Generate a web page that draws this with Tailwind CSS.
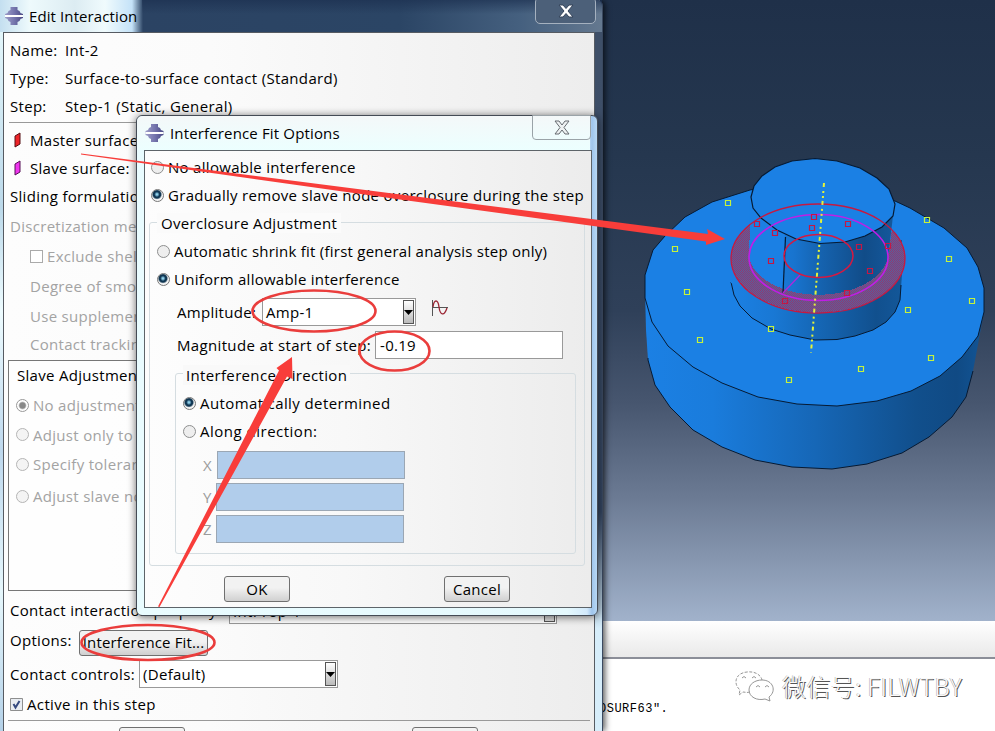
<!DOCTYPE html>
<html lang="en">
<head>
<meta charset="utf-8">
<title>Edit Interaction</title>
<script src="https://cdn.jsdelivr.net/npm/@tailwindcss/browser@4"></script>
</head>
<body class="relative w-[995px] h-[731px] overflow-hidden bg-white text-black text-[15px] leading-[20px] tracking-[0.3px] whitespace-nowrap font-['Open_Sans','Noto_Sans',sans-serif]">
<svg width="0" height="0" class="absolute">
  <defs>
    <linearGradient id="logo" x1="0" x2="1"><stop offset="0" stop-color="#9c9cc8"/><stop offset=".5" stop-color="#7676ae"/><stop offset="1" stop-color="#4b4b86"/></linearGradient>
    <symbol id="app" viewBox="0 0 18 18"><path d="M5.500 0h7v3l2 1 1 2 2.500 1v4l-2.500 1-1 2-2 1v3h-7v-3l-2-1-1-2L0 11V7l2.500-1 1-2 2-1z" fill="url(#logo)"/><path d="M0 9h18" stroke="#fff" stroke-width="2"/></symbol>
  </defs>
</svg>

<!-- viewport, message area -->
<main class="ml-[600px] h-[731px] flex flex-col">
  <svg class="block h-[621px] w-[395px] shrink-0" viewBox="600 0 395 621">
    <defs>
      <linearGradient id="sky" x1="0" y1="0" x2="0" y2="1"><stop offset="0" stop-color="#1f3049"/><stop offset=".25" stop-color="#25374f"/><stop offset=".5" stop-color="#2f4059"/><stop offset=".65" stop-color="#47566f"/><stop offset=".8" stop-color="#6b7a93"/><stop offset="1" stop-color="#a1b2cb"/></linearGradient>
      <linearGradient id="side" gradientUnits="userSpaceOnUse" x1="645" x2="984" y1="0" y2="0"><stop offset="0" stop-color="#1b80e4"/><stop offset=".2" stop-color="#1a7cdc"/><stop offset=".5" stop-color="#1667b7"/><stop offset=".8" stop-color="#114f8c"/><stop offset=".92" stop-color="#104a84"/><stop offset="1" stop-color="#125596"/></linearGradient>
      <linearGradient id="boss" gradientUnits="userSpaceOnUse" x1="731" x2="902" y1="0" y2="0"><stop offset="0" stop-color="#1b80e4"/><stop offset=".25" stop-color="#1978d4"/><stop offset=".5" stop-color="#1567b6"/><stop offset=".85" stop-color="#11508e"/><stop offset="1" stop-color="#135799"/></linearGradient>
      <linearGradient id="pin" gradientUnits="userSpaceOnUse" x1="751" x2="893" y1="0" y2="0"><stop offset="0" stop-color="#1b80e4"/><stop offset=".3" stop-color="#1874cf"/><stop offset=".5" stop-color="#1562ae"/><stop offset=".8" stop-color="#114c88"/><stop offset="1" stop-color="#14589c"/></linearGradient>
      <pattern id="hatch" width="2" height="2" patternUnits="userSpaceOnUse"><rect width="2" height="2" fill="#5a5f9c"/><path d="M0 0h1v1H0zM1 1h1v1H1z" fill="#8e3a72"/></pattern>
    </defs>
    <rect x="600" width="395" height="621" fill="url(#sky)"/>
    <path d="M645 290L646 330 648 360 655 385 670 407 693 430 722 447 755 460 792 467 832 469 867 464 902 453 929 437 952 417 966 397 973 371 984 312z" fill="url(#side)"/>
    <path d="M648 358V360L655 385 670 407 693 430 722 447 755 460 792 467 832 469 867 464 902 453 929 437 952 417 966 397 973 371" fill="none" stroke="#061a33"/>
    <path d="M645 275L653 250 665 236 685 217 712 202 750 190 800 180 850 182 895 201 910 208 927 218 944 228 967 248 978 267 984 288 984 312 978 336 962 357 940 376 911 391 877 401 837 406 797 404 758 397 722 383 693 367 668 346 652 322 645 298z" fill="#1b80e4" stroke="#061a33"/>
    <path d="M731 260V282L734 295 740 306 752 318 771 329 790 335 815 340 837 339.500 855 336 873 330 886 322 895 312 900 300 902 275V240z" fill="url(#boss)"/>
    <path d="M731 282L734 295 740 306 752 318 771 329 790 335 815 340 837 339.500 855 336 873 330 886 322 895 312 900 300 901 285" fill="none" stroke="#061a33"/>
    <path d="M731 283V258A87 54.500 0 0 1 750 222V290z" fill="#1b80e4"/>
    <ellipse cx="818" cy="258.500" rx="87" ry="54.500" fill="#1b80e4"/>
    <path d="M750 200H893V216L888 258A70 43 0 0 1 749 258z" fill="url(#pin)"/>
    <path d="M750 200H786L783 293 765 281 753 269 749 257z" fill="#1b80e4"/>
    <path d="M750 224A87 54.500 0 1 0 892 229L888 257A70 43 0 0 1 749 257z" fill="url(#hatch)" shape-rendering="crispEdges"/>
    <path d="M751 197L754 186 762 176 775 167 792 161 815 158.500 837 161 860 168 877 178 889 189 895 204 893 216 882 227 865 236 845 242 820 243.500 796 239 777 230 761 218 753 208z" fill="#1b80e4" stroke="#061a33" stroke-width="1.200"/>
    <path d="M785.500 237L783 293" stroke="#061a33" stroke-width="1.200"/>
    <ellipse cx="818" cy="258.500" rx="87" ry="54.500" fill="none" stroke="#c71940" stroke-width="1.300"/>
    <ellipse cx="818.500" cy="257.500" rx="69.500" ry="43" fill="none" stroke="#c01ee6" stroke-width="1.600"/>
    <path d="M800 275L783 293" stroke="#b026dc" stroke-width="1.300"/>
    <ellipse cx="818.500" cy="256" rx="34.500" ry="21.500" fill="none" stroke="#d81840" stroke-width="1.500"/>
    <path d="M824 183L811 353" stroke="#e4f23a" stroke-width="2" stroke-dasharray="4 4 2 3 2 3"/>
    <g fill="none" stroke="#c41745" stroke-width="1.200"><path d="M754.500 221.500h5v5h-5zM772.500 230.500h5v5h-5zM811.500 214.500h5v5h-5zM809.500 225.500h5v5h-5zM845.500 221.500h5v5h-5zM768.500 258.500h5v5h-5zM782.500 298.500h5v5h-5zM856.500 244.500h5v5h-5zM885.500 243.500h5v5h-5zM867.500 268.500h5v5h-5zM844.500 290.500h5v5h-5z"/></g>
    <g fill="none" stroke="#c5f23c" stroke-width="1.200"><path d="M725.500 200.500h5v5h-5zM672.500 246.500h5v5h-5zM684.500 289.500h5v5h-5zM697.500 337.500h5v5h-5zM768.500 326.500h5v5h-5zM786.500 377.500h5v5h-5zM858.500 366.500h5v5h-5zM928.500 355.500h5v5h-5zM905.500 307.500h5v5h-5zM969.500 298.500h5v5h-5zM946.500 256.500h5v5h-5zM924.500 217.500h5v5h-5z"/></g>
  </svg>
  <div class="h-[38px] shrink-0 bg-linear-to-b from-white to-[#e9e9e9] border-b-2 border-[#8b8e98]"></div>
  <div class="flex-1 flex">
    <p class="pt-[40px] -ml-[1px] w-[136px] text-[12px] font-['Liberation_Mono',monospace] tracking-[0.5px]">OSURF63".</p>
    <div class="flex items-center h-[54px] gap-[5px]">
      <svg class="w-[42px] h-[34px]" viewBox="0 0 42 34" fill="none" stroke="#8a8a8a" stroke-width=".9"><path d="M15 23C12 24 10 23 8 23L4 26 5 21C-2 15 0 4 12 3c8-1 14 3 15 8" stroke-dasharray="3 1.500"/><path d="M27 11c-7 0-13 4-13 10 0 7 8 11 16 9l5 2-1-4c8-6 4-17-7-17z"/><path d="M7 9q2-3 4 0M17 9q2-3 4 0M21 18q2-3 4 0M30 18q2-3 4 0"/></svg>
      <span class="text-[24px] leading-[30px] font-light text-[#fafafa] tracking-[0.4px] [text-shadow:1px_1px_0_#555,-0.5px_0_0_#aaa] font-['Noto_Sans_CJK_SC',sans-serif]">微信号: FILWTBY</span>
    </div>
  </div>
</main>

<!-- Edit Interaction window -->
<section class="absolute left-0 top-0 w-[603px] h-[731px] rounded-tr-[6px] border-r border-r-[#3a4960] bg-linear-to-b from-[#3e4f68] from-10% via-[#33445f] via-70% to-[#d6edfa] to-86% shadow-[2px_0_6px_#000a]">
  <header class="h-[32px] flex items-center relative bg-[linear-gradient(90deg,#c4dff0_0,#eefafc_30px,#dcecf2_75px,#f0fbfd_105px,#c4e2f8_132px,#2b4363_143px,#2b4565_400px,#45607f_520px,#64788f_100%)] rounded-tr-[6px]">
    <div class="absolute left-[142px] right-0 top-0 h-[14px] bg-linear-to-b from-[#1c3050]/70 to-transparent"></div>
    <svg class="ml-[5px] w-[18px] h-[18px]"><use href="#app"/></svg>
    <h1 class="ml-[6px] tracking-[0.1px]">Edit Interaction</h1>
    <div class="absolute left-[535px] top-[-3px] w-[61px] h-[27px] border border-[#a5b1bf] rounded-[5px] bg-[#4c6079] flex items-center justify-center pt-[1px]">
      <svg class="w-[16px] h-[14px]" viewBox="0 0 16 14"><path d="M1 1h4l3 3.500L11 1h4l-5 6 5 6h-4L8 9.500 5 13H1l5-6z" fill="#fff" stroke="#34445a"/></svg>
    </div>
  </header>
  <div class="absolute left-0 top-[32px] w-[3px] h-[699px] bg-[linear-gradient(#e3f6fb,#bcd9ea_25%,#eefcff_40%,#bed8ed_60%,#e6f7fc_80%,#b4d1e8)]"></div>
  <div class="ml-[3px] w-[592px] h-[699px] border border-b-0 border-[#565b62] bg-linear-to-r from-[#fdfdfd] via-[#fbfbfb] via-35% to-[#ededed] pt-[3px]">
    <div class="h-[28px] flex items-center pl-[6px]"><span class="w-[55px]">Name:</span>Int-2</div>
    <div class="h-[28px] flex items-center pl-[6px]"><span class="w-[55px]">Type:</span><span class="tracking-[0.34px]">Surface-to-surface contact (Standard)</span></div>
    <div class="h-[28px] flex items-center pl-[6px]"><span class="w-[55px]">Step:</span><span class="tracking-[0.38px]">Step-1 (Static, General)</span></div>
    <hr class="mt-[2px] mb-[3px] mx-[5px] border-[#999]">
    <div class="h-[28px] flex items-center pl-[10px] gap-[9px]"><svg class="w-[7px] h-[16px]" viewBox="0 0 7 16"><path d="M1 4L6 1v11L1 15z" fill="#ee2529" stroke="#571015"/></svg>Master surface:</div>
    <div class="h-[28px] flex items-center pl-[10px] gap-[9px]"><svg class="w-[7px] h-[16px]" viewBox="0 0 7 16"><path d="M1 4L6 1v11L1 15z" fill="#ef35ee" stroke="#571057"/></svg>Slave surface:</div>
    <div class="h-[28px] flex items-center pl-[6px]">Sliding formulation:</div>
    <div class="text-[#a3a3a3]">
      <div class="h-[31px] flex items-center pl-[6px]">Discretization method:</div>
      <div class="h-[30px] flex items-center pl-[26px] gap-[4px]"><i class="w-[13px] h-[13px] border border-[#aaa] bg-white"></i>Exclude shell</div>
      <div class="h-[30px] flex items-center pl-[26px]">Degree of smoothing</div>
      <div class="h-[30px] flex items-center pl-[26px]">Use supplementary</div>
      <div class="h-[26px] flex items-center pl-[26px]">Contact tracking</div>
    </div>
    <div class="mt-[3px] ml-[4px] w-[575px] h-[231px] border border-[#777] bg-white/50 text-[#a3a3a3]">
      <div class="h-[28px] flex items-center pl-[8px] text-black">Slave Adjustment</div>
      <div class="h-[32px] flex items-center pl-[7px] gap-[4px]"><i class="w-[13px] h-[13px] rounded-full border border-[#999] bg-[radial-gradient(#888_35%,#fff_55%)]"></i>No adjustment</div>
      <div class="h-[27px] flex items-center pl-[7px] gap-[4px]"><i class="w-[13px] h-[13px] rounded-full border border-[#b5b5b5] bg-[#f4f4f4]"></i>Adjust only to</div>
      <div class="h-[32px] flex items-center pl-[7px] gap-[4px]"><i class="w-[13px] h-[13px] rounded-full border border-[#b5b5b5] bg-[#f4f4f4]"></i>Specify tolerance</div>
      <div class="h-[32px] flex items-center pl-[7px] gap-[4px]"><i class="w-[13px] h-[13px] rounded-full border border-[#b5b5b5] bg-[#f4f4f4]"></i>Adjust slave nodes</div>
    </div>
    <div class="h-[36px] flex items-center pl-[6px] pt-[2px]">Contact interaction property:<div class="ml-auto mr-[37px] w-[328px] h-[26px] mt-[1px] border border-[#999] bg-white flex items-center justify-between px-[1px] pl-[3px]">IntProp-1<i class="w-[11px] h-[22px] border border-[#555] bg-[#ddd]"></i></div></div>
    <div class="h-[30px] flex items-center pl-[6px]"><span class="w-[69px] -mt-[4px]">Options:</span><button class="w-[129px] h-[26px] mt-[1px] pb-[2px] rounded-[3px] border border-[#707070] bg-linear-to-b from-[#f2f2f2] from-45% to-[#cfcfcf] tracking-[0.15px]">Interference Fit...</button></div>
    <div class="h-[34px] flex items-center pl-[6px]"><span class="w-[129px] tracking-[0.38px]">Contact controls:</span><div class="w-[199px] h-[28px] border border-[#999] bg-white flex items-center justify-between pl-[3px] pr-[1px]">(Default)<i class="w-[11px] h-[24px] border border-[#555] bg-linear-to-b from-white to-[#bbb] flex items-center justify-center"><svg class="w-[9px] h-[5px] shrink-0"><path d="M0 0h9L4.500 5z"/></svg></i></div></div>
    <div class="h-[26px] flex items-center pl-[6px] gap-[4px]"><svg class="w-[13px] h-[13px]" viewBox="0 0 13 13"><path d="M.5.500h12v12H.5z" fill="#e9edf2" stroke="#8e8f8f"/><path d="M3.500 6l2 3.500L9.500 3" fill="none" stroke="#354a80" stroke-width="2"/></svg><span class="tracking-[0.36px]">Active in this step</span></div>
    <hr class="mt-[3px] mx-[4px] border-[#999]">
    <div class="flex pt-[6px] pl-[115px] gap-[227px]"><i class="w-[66px] h-[26px] rounded-[3px] border border-[#707070] bg-[#f2f2f2]"></i><i class="w-[66px] h-[26px] rounded-[3px] border border-[#707070] bg-[#f2f2f2]"></i></div>
  </div>
</section>

<!-- Interference Fit Options window -->
<section class="absolute left-[136px] top-[115px] w-[462px] h-[501px] rounded-[6px] border border-[#444b55] bg-[linear-gradient(90deg,#e9fcff_0,#e5f9fd_430px,#d2e9fb_450px,#9fc5ec_455px,#b8d8f4_100%)] shadow-[0_1px_8px_#0009]">
  <header class="h-[34px] flex items-center relative mr-[7px] bg-linear-to-b from-[#f4f8f9] to-[#ecffff] rounded-tl-[6px]">
    <svg class="ml-[8px] w-[19px] h-[18px]"><use href="#app"/></svg>
    <h2 class="ml-[6px] tracking-[0.15px]">Interference Fit Options</h2>
    <div class="absolute left-[395px] top-[-1px] w-[59px] h-[25px] border border-[#9aa3a8] rounded-b-[4px] flex items-center justify-center">
      <svg class="w-[16px] h-[15px]" viewBox="0 0 16 15"><path d="M1 1h4l3 4 3-4h4l-5 6.500 5 6.500h-4L8 10l-3 4H1l5-6.500z" fill="#eef1f2" stroke="#666b70"/></svg>
    </div>
  </header>
  <div class="ml-[7px] w-[448px] h-[458px] border border-[#5d6469] bg-linear-to-r from-[#fdfdfd] via-[#f8f8f8] via-45% to-[#ececec] pt-[2px] px-[4px]">
    <div class="h-[28px] flex items-center pl-[2px] gap-[4px]"><i class="w-[13px] h-[13px] rounded-full border border-[#8e8f8f] bg-[#eee]"></i>No allowable interference</div>
    <div class="h-[28px] flex items-center pl-[2px] gap-[4px]"><i class="w-[13px] h-[13px] rounded-full border border-[#777] bg-[radial-gradient(circle_at_45%_40%,#8fd0ea_8%,#0e3553_30%,#123752_42%,#f4f4f4_58%)]"></i>Gradually remove slave node overclosure during the step</div>
    <div class="relative h-[357px]">
      <div class="absolute left-0 top-[13px] w-[436px] h-[344px] border border-[#d5dde1] rounded-[3px]"></div>
      <div class="relative pl-[8px]">
        <div class="h-[28px] flex items-center"><span class="pl-[4px] pr-[4px] bg-[#fbfbfb]">Overclosure Adjustment</span></div>
        <div class="h-[28px] flex items-center gap-[4px]"><i class="w-[13px] h-[13px] rounded-full border border-[#8e8f8f] bg-[#eee]"></i><span class="tracking-[0.24px]">Automatic shrink fit (first general analysis step only)</span></div>
        <div class="h-[28px] flex items-center gap-[4px]"><i class="w-[13px] h-[13px] rounded-full border border-[#777] bg-[radial-gradient(circle_at_45%_40%,#8fd0ea_8%,#0e3553_30%,#123752_42%,#f4f4f4_58%)]"></i><span class="tracking-[0.26px]">Uniform allowable interference</span></div>
        <div class="h-[38px] flex items-center pl-[20px]"><span class="w-[85px]">Amplitude:</span><div class="w-[154px] h-[28px] border border-[#999] bg-white flex items-center justify-between pl-[3px] pr-[1px]">Amp-1<i class="w-[11px] h-[24px] border border-[#555] bg-linear-to-b from-white to-[#bbb] flex items-center justify-center"><svg class="w-[9px] h-[5px] shrink-0"><path d="M0 0h9L4.500 5z"/></svg></i></div>
          <svg class="ml-[15px] -mt-[9px] w-[18px] h-[18px]" viewBox="0 0 18 18" fill="none"><path d="M1.500 1v16M1 8.500h16" stroke="#555"/><path d="M2 8C3 0 7 0 8 8s5 10 8 1" stroke="#9b2634" stroke-width="1.300"/></svg></div>
        <div class="h-[28px] flex items-center pl-[20px]"><span class="w-[198px] tracking-[0.34px]">Magnitude at start of step:</span><div class="w-[188px] h-[28px] border border-[#999] bg-white flex items-center pl-[4px]">-0.19</div></div>
        <div class="relative ml-[18px]">
          <div class="absolute left-0 top-[14px] w-[401px] h-[181px] border border-[#d5dde1] rounded-[3px]"></div>
          <div class="relative pl-[8px] pt-[2px]">
            <div class="h-[28px] flex items-center"><span class="px-[3px] bg-[#f9f9f9] tracking-[0.34px]">Interference Direction</span></div>
            <div class="h-[28px] flex items-center gap-[4px]"><i class="w-[13px] h-[13px] rounded-full border border-[#777] bg-[radial-gradient(circle_at_45%_40%,#8fd0ea_8%,#0e3553_30%,#123752_42%,#f4f4f4_58%)]"></i><span class="tracking-[0.4px]">Automatically determined</span></div>
            <div class="h-[28px] flex items-center gap-[4px]"><i class="w-[13px] h-[13px] rounded-full border border-[#8e8f8f] bg-[#eee]"></i><span class="tracking-[0.5px]">Along direction:</span></div>
            <div class="pt-[6px] pl-[20px] flex flex-col gap-[4px] text-[#9b9b9b]">
              <div class="flex items-center h-[28px]"><span class="w-[14px]">X</span><div class="w-[188px] h-[28px] border border-[#9ba7b4] bg-[#b1cdeb]"></div></div>
              <div class="flex items-center h-[28px]"><span class="w-[13px]">Y</span><div class="w-[188px] h-[28px] border border-[#9ba7b4] bg-[#b1cdeb]"></div></div>
              <div class="flex items-center h-[28px]"><span class="w-[13px]">Z</span><div class="w-[188px] h-[28px] border border-[#9ba7b4] bg-[#b1cdeb]"></div></div>
            </div>
          </div>
        </div>
      </div>
    </div>
    <div class="flex pt-[10px] pl-[75px] gap-[154px]">
      <button class="w-[66px] h-[26px] rounded-[3px] border border-[#707070] bg-linear-to-b from-[#f2f2f2] from-45% to-[#d0d0d0]">OK</button>
      <button class="w-[66px] h-[26px] rounded-[3px] border border-[#707070] bg-linear-to-b from-[#f2f2f2] from-45% to-[#d0d0d0]">Cancel</button>
    </div>
  </div>
</section>

<!-- red callouts -->
<svg class="absolute inset-0 w-[995px] h-[731px]" viewBox="0 0 995 731">
  <g fill="none" stroke="#ea3d3c" stroke-width="2.600"><ellipse cx="314" cy="311" rx="61.500" ry="20.500"/><ellipse cx="394.500" cy="351" rx="35" ry="19.500"/><ellipse cx="148" cy="642.500" rx="66.500" ry="17.500"/></g>
  <g fill="#f83d3a"><path d="M81 153.500L708 234 707 229 725 239 706 245 706 241.500 400 199.500 81 154.500z"/><path d="M158 606.500L279 370.500 276.500 368 292 357 292.500 379 287 376.500 159.500 607z"/></g>
</svg>
</body>
</html>
